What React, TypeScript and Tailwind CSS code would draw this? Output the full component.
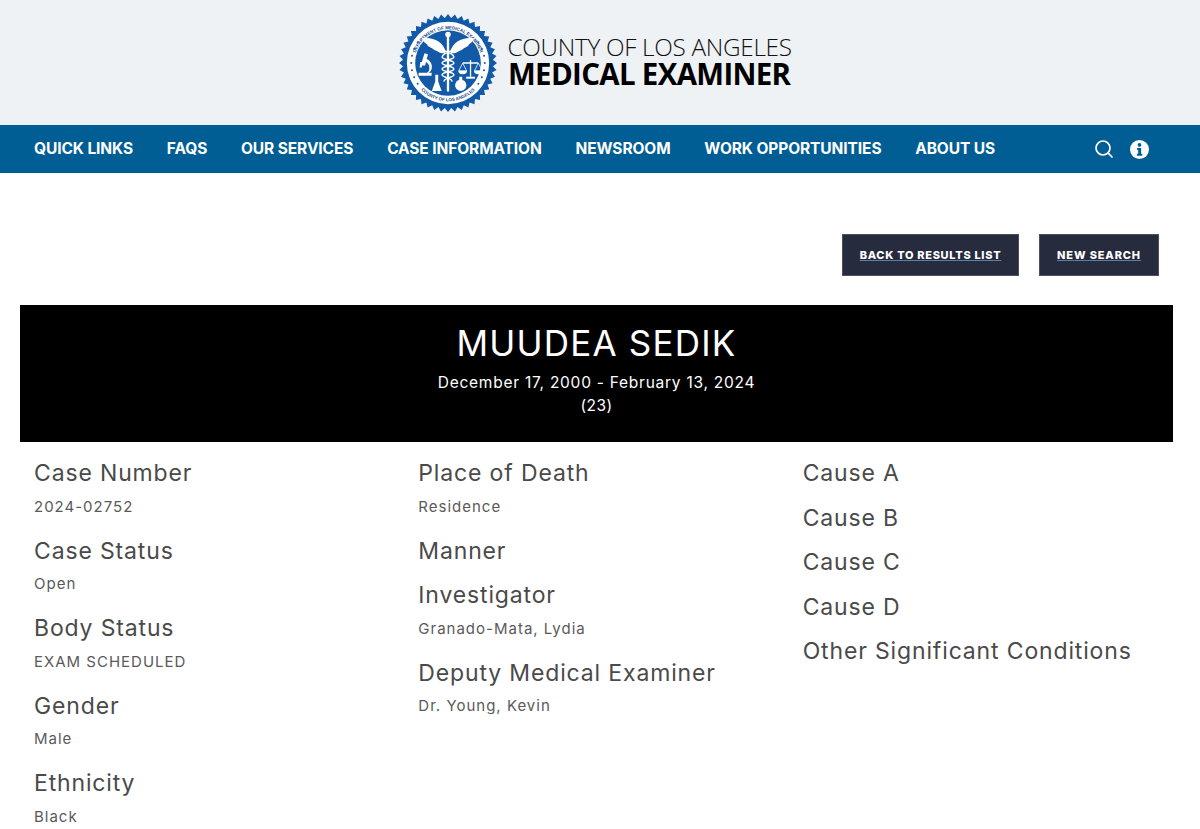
const navItems = ["QUICK LINKS", "FAQS", "OUR SERVICES", "CASE INFORMATION", "NEWSROOM", "WORK OPPORTUNITIES", "ABOUT US"];

const columns: { label: string; value?: string }[][] = [
  [
    { label: "Case Number", value: "2024-02752" },
    { label: "Case Status", value: "Open" },
    { label: "Body Status", value: "EXAM SCHEDULED" },
    { label: "Gender", value: "Male" },
    { label: "Ethnicity", value: "Black" },
  ],
  [
    { label: "Place of Death", value: "Residence" },
    { label: "Manner" },
    { label: "Investigator", value: "Granado-Mata, Lydia" },
    { label: "Deputy Medical Examiner", value: "Dr. Young, Kevin" },
  ],
  [
    { label: "Cause A" },
    { label: "Cause B" },
    { label: "Cause C" },
    { label: "Cause D" },
    { label: "Other Significant Conditions" },
  ],
];

function Seal() {
  const teeth = Array.from({ length: 44 }, (_, i) => {
    const a = (i / 44) * Math.PI * 2;
    const b = ((i + 0.5) / 44) * Math.PI * 2;
    return `${50 + 50 * Math.cos(a)},${50 + 50 * Math.sin(a)} ${50 + 46 * Math.cos(b)},${50 + 46 * Math.sin(b)}`;
  }).join(" ");
  const dots = [-3, -2, -1, 0, 1, 2, 3];
  return (
    <svg viewBox="0 0 100 100" className="h-[98px] w-[98px] shrink-0">
      <defs>
        <path id="sealTop" d="M15.500 50a34.500 34.500 0 0 1 69 0" />
        <path id="sealBottom" d="M11 50a39 39 0 0 0 78 0" />
      </defs>
      <polygon points={teeth} fill="#1259a7" />
      <circle cx="50" cy="50" r="42" fill="#fff" />
      <circle cx="50" cy="50" r="33.500" fill="#1259a7" />
      <text fontFamily="'Liberation Sans',sans-serif" fontWeight="700" fontSize="4.600" fill="#174a85">
        <textPath href="#sealTop" startOffset="50%" textAnchor="middle">DEPARTMENT OF MEDICAL EXAMINER</textPath>
      </text>
      <text fontFamily="'Liberation Sans',sans-serif" fontWeight="700" fontSize="4.600" fill="#174a85">
        <textPath href="#sealBottom" startOffset="50%" textAnchor="middle">COUNTY OF LOS ANGELES</textPath>
      </text>
      {dots.map((i) => (
        <g key={i} fill="#1259a7">
          <circle cx={50 - 37.500 * Math.cos(i * 0.2)} cy={50 + 37.500 * Math.sin(i * 0.2)} r="1" />
          <circle cx={50 + 37.500 * Math.cos(i * 0.2)} cy={50 + 37.500 * Math.sin(i * 0.2)} r="1" />
        </g>
      ))}
      {/* wings */}
      <path d="M48 39C45 28 34 23 23 25c3 3 2 4 6 6-1 1 3 3 5 4 0 1 3 2 5 3 3 2 6 3 9 1zM52 39c3-11 14-16 25-14-3 3-2 4-6 6 1 1-3 3-5 4 0 1-3 2-5 3-3 2-6 3-9 1z" fill="#fff" />
      {/* staff with snakes */}
      <path d="M50 21v57" stroke="#fff" strokeWidth="2.400" strokeLinecap="round" />
      <circle cx="50" cy="21" r="2.800" fill="#fff" />
      <path d="M45 37c6 2 11 4 11 7s-12 3-12 6 12 3 12 6-12 3-12 6 11 3 10 7M55 37c-6 2-11 4-11 7s12 3 12 6-12 3-12 6 12 3 12 6-11 3-10 7" fill="none" stroke="#fff" strokeWidth="1.500" />
      {/* microscope */}
      <path d="M26 40l3.500 1-1.200 5c4.200 2 6 6 5 10-.4 1.500-1.500 3-3 4h3v3H20v-3h8.500c2-1 2.500-3 2.500-5 0-3-1.500-5-3.500-6l-.8 3.500h-3.200l-.3 2h-2.200l.8-5.500h1.500z" fill="#fff" />
      {/* scales */}
      <path d="M73 47v17M65 50h16" stroke="#fff" strokeWidth="1.300" />
      <path d="M68.500 64h9v2h-9z" fill="#fff" />
      <path d="M65 50l-4 8h8zM81 50l-4 8h8z" fill="none" stroke="#fff" strokeWidth="0.800" />
      <path d="M60.500 58h9a4.500 3.500 0 0 1-9 0zM76.500 58h9a4.500 3.500 0 0 1-9 0z" fill="#fff" />
      {/* flasks */}
      <path d="M37 62h3v7l3.500 9.500H33.500L37 69z" fill="#fff" />
      <path d="M61.500 64h3v3.200a5.800 5.800 0 1 1-3 0z" fill="#fff" />
    </svg>
  );
}

export default function App() {
  return (
    <div className="h-[829px] overflow-hidden bg-white font-['Inter',sans-serif] text-[#4a4a4a]">
      <header className="flex h-[125px] items-center justify-center gap-[11px] bg-[#eff2f4] pr-[11px]">
        <Seal />
        <div className="mt-[-4px] flex w-[283px] flex-col font-['Open_Sans',sans-serif] text-[#111]">
          <span className="whitespace-nowrap text-[24.300px] leading-[26px] font-light tracking-[-0.3px]">COUNTY OF LOS ANGELES</span>
          <span className="origin-left scale-x-[0.95] whitespace-nowrap text-[31px] leading-[27px] font-bold tracking-[-0.7px] text-black">MEDICAL EXAMINER</span>
        </div>
      </header>

      <nav className="flex h-[48px] items-center justify-between bg-[#005e95] pr-[51px] pl-[34px] text-white">
        <ul className="flex gap-[33.800px]">
          {navItems.map((item) => (
            <li key={item} className="whitespace-nowrap text-[15.500px] font-bold tracking-[-0.1px]">{item}</li>
          ))}
        </ul>
        <div className="flex items-center gap-[16px]">
          <svg viewBox="0 0 20 20" className="h-[20px] w-[20px]" fill="none" stroke="white" strokeWidth="1.700" strokeLinecap="round">
            <circle cx="9" cy="9" r="7" />
            <path d="M14.200 14.200L18 18" />
          </svg>
          <svg viewBox="0 0 20 20" className="h-[19px] w-[19px]">
            <circle cx="10" cy="10" r="10" fill="white" />
            <circle cx="10" cy="5.200" r="2" fill="#005e95" />
            <path d="M7.500 8.500h4.200v6h1.200V16.500H7.300v-2h1.300v-4H7.500z" fill="#005e95" />
          </svg>
        </div>
      </nav>

      <main className="pr-[27px] pl-[20px]">
        <div className="flex justify-end gap-[20px] pt-[61px] pr-[14px]">
          <a className="flex h-[42px] w-[177px] items-center justify-center border border-[#4b4f60] bg-[#262b3e] text-[11px] font-extrabold tracking-[0.7px] whitespace-nowrap text-white underline decoration-[#5b7fa6] underline-offset-1">BACK TO RESULTS LIST</a>
          <a className="flex h-[42px] w-[120px] items-center justify-center border border-[#4b4f60] bg-[#262b3e] text-[11px] font-extrabold tracking-[0.85px] whitespace-nowrap text-white underline decoration-[#5b7fa6] underline-offset-1">NEW SEARCH</a>
        </div>

        <section className="mt-[29px] flex h-[137px] flex-col items-center bg-black pt-[16px] text-white">
          <h1 className="text-[35px] leading-[44px] font-normal tracking-[1.2px]">MUUDEA SEDIK</h1>
          <p className="mt-[6px] text-[15.500px] leading-[23px] tracking-[0.75px]">December 17, 2000 - February 13, 2024</p>
          <p className="text-[15.500px] leading-[23px] tracking-[0.4px]">(23)</p>
        </section>

        <div className="grid grid-cols-3 pt-[9px]">
          {columns.map((col, i) => (
            <div key={i} className="flex flex-col px-[14px]">
              {col.map((row) => (
                <div key={row.label} className="flex flex-col">
                  <h3 className="text-[23px] leading-[44.500px] font-normal tracking-[0.85px] whitespace-nowrap text-[#4a4a4a]">{row.label}</h3>
                  {row.value && <p className="mb-[12px] text-[15px] leading-[21px] tracking-[1px] text-[#5a5a5a]">{row.value}</p>}
                </div>
              ))}
            </div>
          ))}
        </div>
      </main>
    </div>
  );
}
